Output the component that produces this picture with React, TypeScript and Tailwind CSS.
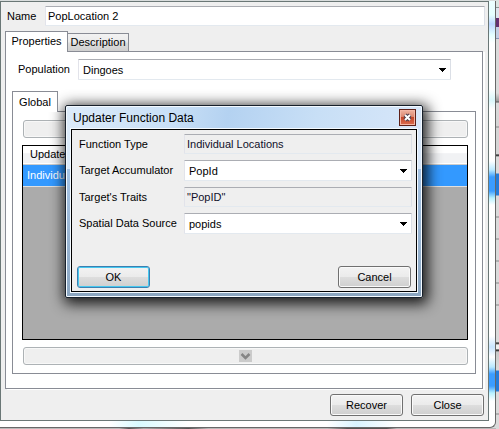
import React from "react";

const FONT = "font-['Liberation_Sans',Arial,sans-serif]";
const BUTTON =
  "h-[22px] w-[73px] rounded-[3px] border bg-[linear-gradient(#f3f3f3_0%,#ebebeb_48%,#dddddd_52%,#cfcfcf_100%)] text-center text-[11px] leading-[18px] shadow-[inset_0_0_0_1px_#fafafa]";
const FIELD =
  "w-full min-w-0 rounded-[1px] border border-t-[#abadb3] border-r-[#dbdfe6] border-b-[#e3e9ef] border-l-[#e2e3ea] outline-none";

function Combo({ id, value }: { id: string; value: string }) {
  return (
    <div className="relative min-w-0 flex-1">
      <select
        id={id}
        defaultValue={value}
        className={`${FIELD} block h-[21px] appearance-none bg-white pl-1 text-[11px] leading-[18px] text-black`}
      >
        <option>{value}</option>
      </select>
      <svg
        className="pointer-events-none absolute top-2 right-1 h-[5px] w-2"
        viewBox="0 0 8 5"
        shapeRendering="crispEdges"
        aria-hidden="true"
      >
        <path d="M0 1h7v1H0zM1 2h5v1H1zM2 3h3v1H2zM3 4h1v1H3z" fill="#000" />
      </svg>
    </div>
  );
}

function ReadOnly({ id, value }: { id: string; value: string }) {
  return (
    <input
      id={id}
      readOnly
      defaultValue={value}
      className={`${FIELD} h-5 flex-1 bg-[#efefef] pl-0.5 text-[11px] text-[#10102a]`}
    />
  );
}

function MoveButton({ down }: { down?: boolean }) {
  return (
    <button
      type="button"
      disabled
      aria-label={down ? "Move down" : "Move up"}
      className="flex h-[18px] w-full items-center justify-center rounded-[3px] border border-[#adb2b5] bg-[#efefef] shadow-[inset_0_0_0_1px_#f8f8f8]"
    >
      <svg width="13" height="12" viewBox="0 0 13 12" aria-hidden="true">
        <path d="M0 0h13v12H0z" fill="#cbcbcb" />
        <path
          d={down ? "M2.5 4l4 4 4-4" : "M2.5 8l4-4 4 4"}
          fill="none"
          stroke="#858585"
          strokeWidth="2.5"
        />
      </svg>
    </button>
  );
}

function UpdaterDialog() {
  return (
    <section
      role="dialog"
      aria-labelledby="dialog-title"
      className="absolute top-[105px] left-[65px] w-[358px] rounded-[2px] border border-[#17202b] bg-[linear-gradient(100deg,#dcebfa_0%,#c8dff6_28%,#b4d2f1_42%,#c8dff6_65%,#dce9fa_100%)] px-[5px] pb-[5px] shadow-[inset_0_0_0_1px_#f4faff,2px_3px_14px_3px_rgba(0,0,0,0.85)]"
    >
      <div className="absolute inset-x-px top-[63px] bottom-px bg-[linear-gradient(#a5c3e4,#8ba6c1)]" />
      <header className="relative flex h-[23px] items-center justify-between pr-px pl-0.5">
        <h1 id="dialog-title" className="text-xs leading-4 text-black">
          Updater Function Data
        </h1>
        <button
          type="button"
          aria-label="Close dialog"
          className="flex h-[17px] w-[17px] items-center justify-center border border-[#5d2018] bg-[linear-gradient(#efb5a2_0%,#dc8670_45%,#c4472a_50%,#db6d50_100%)] shadow-[inset_0_0_0_1px_#f3b6a5]"
        >
          <svg width="9" height="9" viewBox="0 0 9 9" aria-hidden="true">
            <path d="M2 2l5 5M7 2L2 7" stroke="#4b3b48" strokeWidth="4" />
            <path d="M2 2l5 5M7 2L2 7" stroke="#fff" strokeWidth="2" />
          </svg>
        </button>
      </header>
      <form className="relative border border-black bg-[#efefef] px-1 pt-1 pb-[3px] text-[11px] shadow-[0_0_0_1px_#f4faff]">
        <div className="flex flex-col gap-1.5 pl-[3px]">
          <div className="flex items-center">
            <label htmlFor="function-type" className="w-[105px]">Function Type</label>
            <ReadOnly id="function-type" value="Individual Locations" />
          </div>
          <div className="flex items-center">
            <label htmlFor="accumulator" className="w-[105px]">Target Accumulator</label>
            <Combo id="accumulator" value="PopId" />
          </div>
          <div className="flex items-center">
            <label htmlFor="traits" className="w-[105px]">Target's Traits</label>
            <ReadOnly id="traits" value={'"PopID"'} />
          </div>
          <div className="flex items-center">
            <label htmlFor="source" className="w-[105px]">Spatial Data Source</label>
            <Combo id="source" value="popids" />
          </div>
        </div>
        <div className="mt-8 flex justify-between px-px">
          <button type="button" className={`${BUTTON} border-[#3c7fb1] ring-1 ring-[#46c8ef] ring-inset`}>
            OK
          </button>
          <button type="button" className={`${BUTTON} border-[#707070]`}>Cancel</button>
        </div>
      </form>
    </section>
  );
}

export default function App() {
  return (
    <div className={`${FONT} relative flex min-h-screen w-full overflow-hidden bg-[#d9dddd] text-xs text-black`}>
      <div className="flex min-w-0 flex-1 flex-col pt-px">
        <div className="flex flex-1 rounded-br-[6px] border-r border-b border-[#686868] bg-[linear-gradient(90deg,#ffffff_0%,#ffffff_22%,#d9fbff_28%,#ffffff_38%,#ffffff_66%,#d9f4ff_72%,#ffffff_80%)]">
          <main className="mb-1.5 flex min-w-0 flex-1 flex-col border border-[#6a7776] bg-[#efefef] pt-1 pr-[3px] pl-1">
            <div className="flex items-center pl-0.5">
              <label htmlFor="name" className="w-[38px] text-[11px]">Name</label>
              <input id="name" defaultValue="PopLocation 2" className={`${FIELD} h-5 flex-1 bg-white pl-0.5 text-[11px]`} />
            </div>
            <div role="tablist" className="relative z-10 mt-[5px] flex items-end">
              <button type="button" role="tab" aria-selected="true" className="-mb-px h-[21px] w-[63px] border border-b-0 border-[#898c95] bg-white pb-0.5 text-[11px]">
                Properties
              </button>
              <button type="button" role="tab" aria-selected="false" className="h-[18px] w-[61px] border border-b-0 border-l-0 border-[#898c95] bg-[linear-gradient(#f2f2f2_0%,#ebebeb_48%,#dddddd_52%,#cfcfcf_100%)] text-[11px]">
                Description
              </button>
            </div>
            <div className="mr-0.5 flex flex-col border border-[#898c95] bg-white px-1.5 pt-[7px] pb-3.5 shadow-[2px_1px_0_#ffffff]">
              <div className="mr-[25px] flex items-center pl-1.5">
                <label htmlFor="population" className="w-[60px] text-[11px]">Population</label>
                <Combo id="population" value="Dingoes" />
              </div>
              <div role="tablist" className="relative z-10 mt-[11px] flex">
                <button type="button" role="tab" aria-selected="true" className="-mb-px h-[21px] w-[46px] border border-b-0 border-[#898c95] bg-white text-[11px]">
                  Global
                </button>
              </div>
              <div className="border border-[#898c95] py-2 pr-[7px] pl-[9px]">
                <div className="pl-px"><MoveButton /></div>
                <div className="my-[7px] h-[195px] border border-black bg-[#ababab]">
                  <table className="w-full border-collapse text-left text-[11px]">
                    <thead>
                      <tr className="h-[18px] border-b border-[#cccccc] bg-[linear-gradient(#ffffff_40%,#f1f2f4_45%)]">
                        <th className="py-0 pl-[7px] font-normal">Updater</th>
                      </tr>
                    </thead>
                    <tbody>
                      <tr className="h-[22px] border-b border-[#e0e0e0] bg-[#3399ff] text-white">
                        <td className="py-0 pl-1">Individual</td>
                      </tr>
                    </tbody>
                  </table>
                </div>
                <div className="pl-px"><MoveButton down /></div>
              </div>
            </div>
            <div className="mt-[5px] mb-[3px] flex justify-end gap-2 pr-px">
              <button type="button" className={`${BUTTON} border-[#707070]`}>Recover</button>
              <button type="button" className={`${BUTTON} border-[#707070]`}>Close</button>
            </div>
          </main>
          <div className="mb-1.5 w-1.5 bg-[linear-gradient(#ecffff_0px,#e5ffff_14px,#bdd6ff_23px,#e5ffff_34px,#ffffff_42px,#ffffff_88px,#d9f7fa_99px,#ffffff_108px,#ffffff_160px,#b9e9ff_169px,#3b9cff_176px,#3b9cff_190px,#b9f2ff_197px,#ffffff_204px,#ffffff_335px,#c9e5ff_346px,#ffffff_356px,#b9e9ff_366px,#3b9cff_373px,#3b9cff_385px,#b9f2ff_392px,#ffffff_400px)]" />
        </div>
        <div className="h-px bg-[linear-gradient(90deg,#b9b9b9_24%,#555555_26%,#aaaaaa_29%,#555555_38%,#b9b9b9_42%,#b9b9b9_66%,#555555_70%,#555555_78%,#b9b9b9_80%)]" />
      </div>
      <div className="w-[3px] bg-[linear-gradient(#d9e4e1_0px,#d9e4e1_7px,#8b9694_7px,#8b9694_8px,#dce4ed_8px,#dce4ed_18px,#632f70_18px,#632f70_27px,#c2cde3_27px,#c2cde3_38px,#8795b5_38px,#8795b5_39px,#dadada_39px,#dadada_93px,#999999_101px,#555555_102px,#dadada_103px,#d5d5d5_126px,#888888_127px,#d5d5d5_128px,#d5d5d5_154px,#111111_155px,#dadada_157px,#dadada_173px,#247bd8_174px,#247bd8_195px,#dadada_196px,#dadada_216px,#888888_217px,#dadada_218px,#dadada_238px,#888888_239px,#dadada_240px,#dadada_260px,#888888_261px,#dadada_262px,#dadada_282px,#888888_283px,#dadada_284px,#dadada_304px,#888888_305px,#dadada_306px,#dadada_342px,#111111_343px,#eeeeee_345px,#eeeeee_349px,#111111_350px,#c8c8c8_352px,#dadada_370px,#247bd8_371px,#247bd8_391px,#dadada_392px,#dadada_413px,#888888_414px,#dadada_415px)]" />
      <UpdaterDialog />
    </div>
  );
}
